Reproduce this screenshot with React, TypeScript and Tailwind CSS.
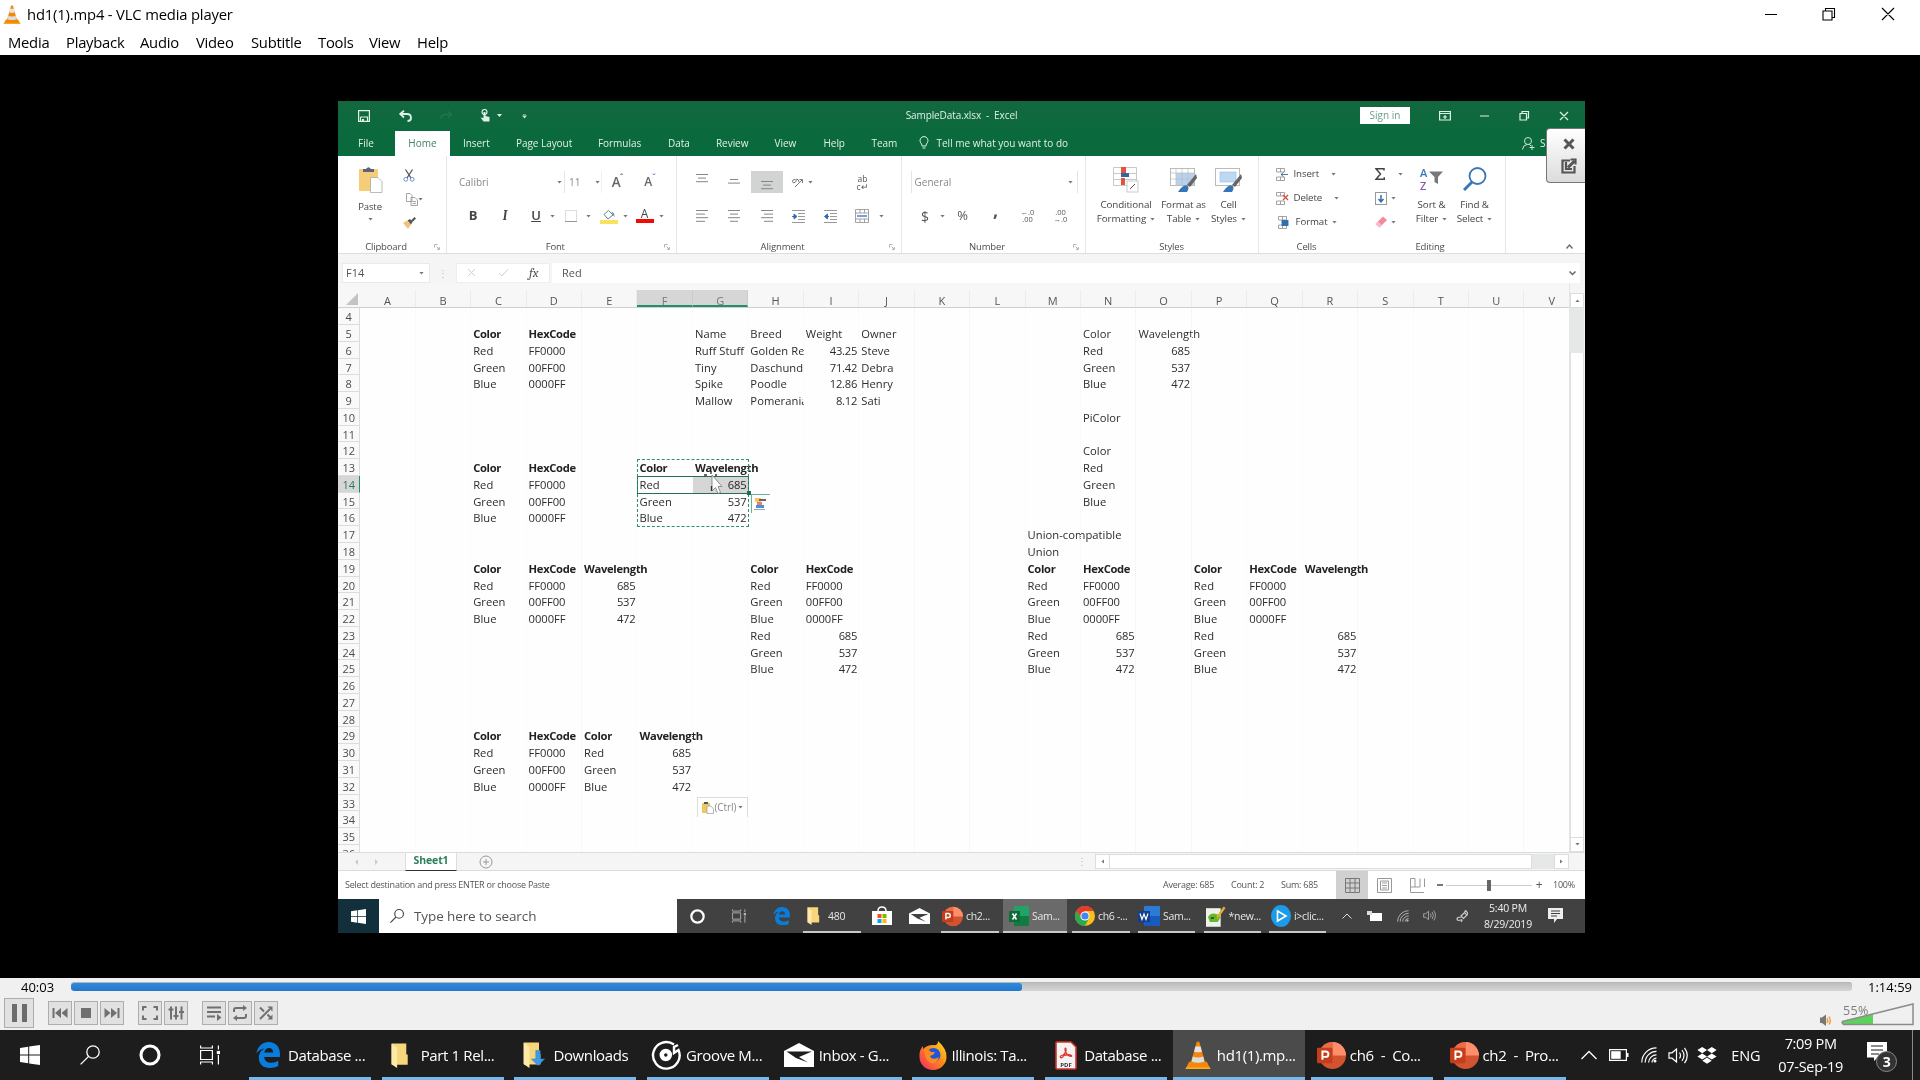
import React from "react";

type Kids = { children?: React.ReactNode; c?: string };

/* ---------- shared drawings ---------- */

const Cone = ({ s }: { s: number }) => (
  <svg width={s} height={s * 1.1} viewBox="0 0 20 22">
    <path d="M3.2 16 L16.8 16 L19.6 21.5 L0.4 21.5Z" fill="#f28a0c" />
    <path d="M0.8 20.4 H19.2 L19.6 22 H0.4Z" fill="#fdb01c" />
    <path d="M9 0.6 H11 L15.8 17.6 Q10 20 4.2 17.6Z" fill="#f5860d" />
    <path d="M8 4.2 H12 L13 8.2 Q10 9 7 8.2Z" fill="#e4e4e4" />
    <path d="M6 12 Q10 13.4 14 12 L15 15.8 Q10 17.8 5 15.8Z" fill="#dcdcdc" />
  </svg>
);

const Win = ({ s, f = "#fff" }: { s: number; f?: string }) => (
  <svg width={s} height={s} viewBox="0 0 20 20" fill={f}>
    <path d="M0 2.9 L8.2 1.8 V9.5 H0Z M9.2 1.6 L20 0 V9.5 H9.2Z M0 10.5 H8.2 V18.2 L0 17.1Z M9.2 10.5 H20 V20 L9.2 18.4Z" />
  </svg>
);

const Lens = ({ s, f = "#fff", w = 1.3 }: { s: number; f?: string; w?: number }) => (
  <svg width={s} height={s} viewBox="0 0 20 20" fill="none" stroke={f} strokeWidth={w}>
    <circle cx="13" cy="7" r="6.2" />
    <path d="M8.6 11.4 L0.6 19.4" />
  </svg>
);

const Ring = ({ s, w }: { s: number; w: number }) => (
  <svg width={s} height={s} viewBox="0 0 20 20" fill="none" stroke="#fff" strokeWidth={w}>
    <circle cx="10" cy="10" r="8.2" />
  </svg>
);

const TaskView = ({ s, f = "#fff" }: { s: number; f?: string }) => (
  <svg width={s} height={s} viewBox="0 0 20 20" fill="none" stroke={f} strokeWidth="1.2">
    <path d="M0.6 0.5 V3 H12.4 V0.5 M0.6 19.5 V17 H12.4 V19.5 M0.6 5.5 H12.4 V14.5 H0.6Z M18.4 0.5 V4.5 M18.4 10 V19.5" />
    <rect x="17.4" y="6.5" width="2" height="2" fill={f} />
  </svg>
);

const Edge = ({ s }: { s: number }) => (
  <svg width={s} height={s * 1.08} viewBox="0 0 24 26">
    <path
      d="M0.3 11.5 C1.5 4.5 6.5 0 12.8 0 C19.5 0 24 5 24 11.6 V15 H8.2 C8.4 19 11.6 20.8 15.2 20.8 C18 20.8 20.3 20 22.3 18.8 V24 C20 25.3 17 26 14 26 C7 26 2.8 22 2.8 16 C2.8 11.5 5.2 8.2 8.6 6.6 C5.3 6.9 2.3 8.6 0.3 11.5Z M8.3 10.6 H17.2 C17.2 7.8 15.6 6 13 6 C10.5 6 8.8 7.8 8.3 10.6Z"
      fill="#0a7cdc"
    />
  </svg>
);

const Folder = ({ s, arrow }: { s: number; arrow?: boolean }) => (
  <svg width={s} height={s} viewBox="0 0 26 26" className="overflow-visible">
    <path d="M4 0.5 H19 V12 H20.5 V22.5 H4Z" fill="#f7d57a" />
    <path d="M3.5 0.5 L9.5 5 V26 L3.5 22Z" fill="#ffe9a6" />
    {arrow && <path d="M15.8 8.5 H20.2 V17 H24.6 L18 23.5 L11.4 17 H15.8Z" fill="#3b9be6" stroke="#2b7fc4" strokeWidth=".5" />}
  </svg>
);

const Envelope = ({ w, f = "#1d1d1d" }: { w: number; f?: string }) => (
  <svg width={w} height={w * 0.8} viewBox="0 0 30 24">
    <path d="M0 8 L15 0 L30 8 V24 H0Z" fill="#fff" />
    <path d="M2.5 8.5 H28 L15 14 L24 19.5 L12 15 Z" fill={f} />
  </svg>
);

const Ppt = ({ s }: { s: number }) => (
  <svg width={s} height={s} viewBox="0 0 30 30">
    <circle cx="16" cy="15" r="14" fill="#d35230" />
    <path d="M16 1 A14 14 0 0 1 30 15 H16Z" fill="#ff8f6b" />
    <path d="M16 1 A14 14 0 0 0 2 15 H16Z" fill="#ed6c47" />
    <rect x="0" y="7" width="16" height="16" rx="1.2" fill="#c43e1c" />
    <path d="M5.6 19.4 V10.8 H9 A2.8 2.8 0 0 1 9 16.4 H5.6" fill="none" stroke="#fff" strokeWidth="2" />
  </svg>
);

const Caret = ({ c = "" }: { c?: string }) => (
  <svg width="5" height="3" viewBox="0 0 5 3" className={"shrink-0 " + c}>
    <path d="M.4 0 H4.600 L2.500 2.600Z" fill="#777" />
  </svg>
);

const Wifi = ({ s, f = "#fff" }: { s: number; f?: string }) => (
  <svg width={s} height={s} viewBox="0 0 16 16" fill="none" stroke={f} strokeWidth="1.2">
    <path d="M0.8 15.5 A14.6 14.6 0 0 1 15.5 0.9 M4.2 15.5 A11.2 11.2 0 0 1 15.5 4.4 M7.6 15.5 A7.8 7.8 0 0 1 15.5 7.9 M11 15.5 A4.5 4.5 0 0 1 15.5 11.2" />
    <circle cx="14" cy="14" r="1.5" fill={f} stroke="none" />
  </svg>
);

const Speaker = ({ s, f = "#fff" }: { s: number; f?: string }) => (
  <svg width={s} height={s * 0.85} viewBox="0 0 20 17" fill="none" stroke={f} strokeWidth="1.2">
    <path d="M1 5.8 H4 L8.5 2 V15 L4 11.2 H1Z M11.5 5.5 Q13.5 8.5 11.5 11.5 M14 3 Q18 8.5 14 14 M16.5 0.8 Q22 8.5 16.5 16.2" />
  </svg>
);

/* ---------- ribbon ---------- */

const Slot = ({ children, c = "" }: Kids) => (
  <div className={"flex shrink-0 items-center justify-center " + c}>{children}</div>
);

const Lines = ({ rows, c = "" }: { rows: [number, number][]; c?: string }) => (
  <svg width="12" height="14" viewBox="0 0 12 14" className={c} stroke="#868686" strokeWidth="1">
    {rows.map(([x, w], i) => (
      <path key={i} d={`M${x} ${1.5 + i * 3.6} H${x + w}`} />
    ))}
  </svg>
);

const Indent = ({ flip }: { flip?: boolean }) => (
  <svg width="13" height="13" viewBox="0 0 13 13" stroke="#999">
    <path d="M0 .5 H13 M6 3.5 H13 M6 6.5 H13 M6 9.5 H13 M0 12.5 H13" />
    <path d={flip ? "M5 6.5 L2 4 V9Z M0 6.5 H3" : "M0.5 6.5 L3.5 4 V9Z M3 6.5 H5"} fill="#2f6fb0" stroke="#2f6fb0" />
  </svg>
);

const Launcher = () => (
  <svg width="6" height="6" viewBox="0 0 6 6" fill="none" stroke="#aaa" strokeWidth=".9">
    <path d="M.5 3.5 V.5 H3.5 M2.5 2.5 L5.3 5.3 M5.4 3 V5.4 H3" />
  </svg>
);

const Group = ({ children, c, label, launch }: Kids & { label: string; launch?: boolean }) => (
  <div className={"flex h-[97px] shrink-0 flex-col border-r border-[#e6e6e6] " + c}>
    <div className="h-[85px] shrink-0">{children}</div>
    <div className={"grid h-[12px] shrink-0 items-center " + (launch ? "grid-cols-[0px_1fr_12px]" : "grid-cols-[0px_1fr_0px]")}>
      <span />
      <span className="text-center text-[9.5px] leading-[12px] tracking-[-0.15px] text-[#4c4c4c]">{label}</span>
      {launch && <Launcher />}
    </div>
  </div>
);

const Clipboard = () => (
  <Group label="Clipboard" launch c="w-[109px]">
    <div className="flex h-full">
      <div className="flex w-[64px] flex-col items-center pt-[11px]">
        <svg width="25" height="26" viewBox="0 0 25 26">
          <rect x="1" y="2" width="19" height="22" rx="1" fill="#f5cd78" />
          <path d="M5 2 H8 Q10.500 -1.500 13 2 H16 V5 H5Z" fill="#5e6275" />
          <path d="M12.500 10.500 H20 L24 14.500 V25.500 H12.500Z" fill="#fff" stroke="#aaa" strokeWidth=".8" />
        </svg>
        <span className="mt-[7px] text-[9.5px] leading-[14px] tracking-[-0.1px] text-[#444]">Paste</span>
        <Caret c="mt-[4px]" />
      </div>
      <div className="flex flex-col pt-[9px]">
        <Slot c="h-[20px] w-[14px]">
          <svg width="12" height="13" viewBox="0 0 12 13" fill="none">
            <path d="M2.500 0.500 L8 9 M9.500 0.500 L4 9" stroke="#555" strokeWidth="1.300" />
            <circle cx="2.800" cy="10.300" r="1.900" stroke="#6c8fc4" />
            <circle cx="9.200" cy="10.300" r="1.900" stroke="#6c8fc4" />
          </svg>
        </Slot>
        <Slot c="-ml-px mt-[4px] h-[20px] w-[26px] justify-between">
          <svg width="12" height="13" viewBox="0 0 12 13" fill="#fff" stroke="#9a9a9a" strokeWidth=".9">
            <path d="M.5 .5 H4 L6 2.500 V8.500 H.5Z M5 4.500 H9 L11.500 7 V12.500 H5Z M6.500 8.500 H10 M6.500 10.500 H10" />
          </svg>
          <Caret />
        </Slot>
        <Slot c="mt-[4px] h-[20px] w-[15px]">
          <svg width="13" height="12" viewBox="0 0 13 12">
            <path d="M0 6 L4 3.500 L8 7.500 L5 12Z" fill="#f2c374" />
            <path d="M4.500 3.500 L7 2 L9.500 5 L8 7.500Z" fill="#555" />
            <path d="M8 3.500 L11.500 0 L13 1.500 L9.500 5Z" fill="#555" />
          </svg>
        </Slot>
      </div>
    </div>
  </Group>
);

const FontGroup = () => (
  <Group label="Font" launch c="w-[229.5px]">
    <div className="flex h-[37px] pt-[15px] text-[10px] text-[#888] [&>*]:h-[22px]">
      <span className="w-[108px] pl-[12px] leading-[22px]">Calibri</span>
      <Slot c="w-[10px] border-r border-[#e4e4e4]"><Caret /></Slot>
      <span className="w-[28px] pl-[4px] leading-[22px]">11</span>
      <Slot c="w-[9px] border-r border-[#f0f0f0]"><Caret /></Slot>
      <Slot c="w-[31px] text-[13.5px] font-semibold text-[#666]">A<span className="-ml-px -mt-[9px] text-[8px]">ˆ</span></Slot>
      <Slot c="w-[34px] text-[12px] font-semibold text-[#666]">A<span className="-mt-[9px] text-[8px] text-[#4a6fb5]">ˇ</span></Slot>
    </div>
    <div className="flex h-[36px] pt-[12px] text-[13px] text-[#444] [&>*]:h-[22px]">
      <Slot c="w-[52px] font-bold">B</Slot>
      <Slot c="-ml-[6px] w-[24px] font-serif font-bold italic">I</Slot>
      <Slot c="ml-[8px] w-[22px] font-semibold underline">U</Slot>
      <Slot c="w-[10px]"><Caret /></Slot>
      <Slot c="w-[28px]">
        <svg width="12" height="12" viewBox="0 0 12 12" fill="none" stroke="#bbb"><path d="M.5 .5 H11.500 V11.500 H.5Z" strokeDasharray="1 1" /><path d="M0 11.500 H12" stroke="#999" /></svg>
      </Slot>
      <Slot c="w-[7px]"><Caret /></Slot>
      <Slot c="w-[33px]">
        <svg width="18" height="15" viewBox="0 0 18 15">
          <path d="M4 5.500 L8.500 1.500 L13 6 L8 10Z" fill="#fff" stroke="#68808c" />
          <path d="M11.500 2.500 Q15 4 14.300 8 L12.500 5Z" fill="#4a8fb5" />
          <rect y="11" width="18" height="4" fill="#fbe25e" />
        </svg>
      </Slot>
      <Slot c="w-[3px]"><Caret c="-ml-[3px]" /></Slot>
      <Slot c="w-[33px] flex-col">
        <span className="mt-[-3px] h-[12px] text-[12px] leading-[13px]">A</span>
        <span className="h-[4px] w-[18px] bg-[#f00a0a]" />
      </Slot>
      <Slot c="w-[3px]"><Caret c="-ml-[3px]" /></Slot>
    </div>
  </Group>
);

const Alignment = () => (
  <Group label="Alignment" launch c="w-[225px]">
    <div className="flex h-[37px] pl-[9px] pt-[15px] [&>*]:h-[22px]">
      <Slot c="w-[32px]"><Lines rows={[[0, 12], [2, 8], [0, 12]]} c="-mt-[4px]" /></Slot>
      <Slot c="w-[33px]"><Lines rows={[[2, 8], [0, 12]]} c="mt-[6px]" /></Slot>
      <Slot c="w-[32px] bg-[#d2d3d3]"><Lines rows={[[0, 12], [2, 8], [0, 12]]} c="mt-[9px]" /></Slot>
      <Slot c="w-[29px]">
        <svg width="12" height="11" viewBox="0 0 12 11" fill="none" stroke="#777"><path d="M4 10 L11 3 M8.500 2.500 L11.500 2.500 V6 M2 3 Q4 1 5.500 4 L3 6 Q0 5 2 3 M5 2 Q8 2 8 5" /></svg>
      </Slot>
      <Slot c="w-[3px]"><Caret c="-ml-[6px]" /></Slot>
      <Slot c="ml-[15px] w-[66px] flex-col text-[8.5px] leading-[9px] text-[#555]"><span className="h-[8px]">ab</span><span className="h-[9px]">c↵</span></Slot>
    </div>
    <div className="flex h-[36px] pl-[9px] pt-[12px] [&>*]:h-[22px]">
      <Slot c="w-[32px]"><Lines rows={[[0, 12], [0, 9], [0, 12], [0, 9]]} /></Slot>
      <Slot c="w-[33px]"><Lines rows={[[0, 12], [2, 8], [0, 12], [2, 8]]} /></Slot>
      <Slot c="w-[32px]"><Lines rows={[[0, 12], [3, 9], [0, 12], [3, 9]]} /></Slot>
      <Slot c="w-[32px]"><Indent flip /></Slot>
      <Slot c="w-[32px]"><Indent /></Slot>
      <Slot c="w-[30px]">
        <svg width="14" height="14" viewBox="0 0 14 14" fill="none" stroke="#999" strokeWidth=".9"><path d="M.5 .5 H13.500 V13.500 H.5Z M.5 4 H13.500 M.5 10 H13.500 M5 .5 V4 M9.500 .5 V4 M5 10 V13 M9.500 10 V13" /><path d="M2 7 H12" stroke="#3c7cc4" strokeWidth="1.400" /></svg>
      </Slot>
      <Slot c="w-[10px]"><Caret /></Slot>
    </div>
  </Group>
);

const NumberGroup = () => (
  <Group label="Number" launch c="w-[184px]">
    <div className="flex h-[37px] pt-[15px]">
      <div className="ml-[9px] flex h-[22px] w-[167px] items-center justify-between border-x border-[#e4e4e4] pl-[3px] pr-[4px] text-[10px] text-[#888]">
        General <Caret />
      </div>
    </div>
    <div className="flex h-[36px] pl-[8px] pt-[12px] text-[13px] text-[#555] [&>*]:h-[22px]">
      <Slot c="w-[31px] text-[14px]">$</Slot>
      <Slot c="w-[4px]"><Caret /></Slot>
      <Slot c="w-[36px]">%</Slot>
      <Slot c="w-[30px] pb-[12px] text-[18px] font-bold">,</Slot>
      <Slot c="w-[34px] flex-col text-[7.5px] leading-[7px]"><span><b className="text-[#3c6ca4]">←</b>.0</span><span>.00</span></Slot>
      <Slot c="w-[32px] flex-col text-[7.5px] leading-[7px]"><span>.00</span><span><b className="text-[#3c6ca4]">→</b>.0</span></Slot>
    </div>
  </Group>
);

const Big = ({ c, icon, a, b }: { c: string; icon: React.ReactNode; a: string; b: string }) => (
  <div className={"flex shrink-0 flex-col items-center pt-[11px] text-[9.8px] leading-[14px] tracking-[-0.1px] text-[#444] " + c}>
    <div className="h-[31px]">{icon}</div>
    <span className="whitespace-nowrap">{a}</span>
    <span className="flex items-center gap-[4px] whitespace-nowrap">{b}<Caret /></span>
  </div>
);

const Brush = () => (
  <>
    <path d="M26 7 L17 18 L20 20 L27 11Z" fill="#666" />
    <path d="M8 25 Q13 17 17 18.500 Q20 20 17 25Z" fill="#3874b8" />
  </>
);

const Styles = () => (
  <Group label="Styles" c="w-[173px]">
    <div className="flex">
      <Big c="w-[81px]" a="Conditional" b="Formatting" icon={
        <svg width="26" height="26" viewBox="0 0 26 26">
          <path d="M.5 .5 H23.500 V18.500 H.5Z M.5 6.500 H23.500 M.5 12.500 H23.500" fill="#fff" stroke="#bbb" strokeWidth=".8" />
          <rect x="8" y="0" width="5" height="6" fill="#e0553c" /><rect x="8" y="6" width="8" height="4" fill="#336699" /><rect x="8" y="11" width="4" height="7" fill="#e0553c" />
          <rect x="14" y="14" width="11" height="11" fill="#fff" stroke="#ccc" /><path d="M17 22 L22 17" stroke="#555" />
        </svg>} />
      <Big c="w-[34px]" a="Format as" b="Table" icon={
        <svg width="27" height="26" viewBox="0 0 27 26">
          <rect x=".5" y="1.500" width="24" height="17" fill="#fff" stroke="#bbb" /><rect x="6" y="6" width="18" height="12" fill="#b6d2ef" />
          <path d="M.5 6 H24 M.5 12 H24 M6 1 V18 M12 1 V18 M18 1 V18" stroke="#bbb" strokeWidth=".7" /><Brush />
        </svg>} />
      <Big c="w-[56px]" a="Cell" b="Styles" icon={
        <svg width="27" height="26" viewBox="0 0 27 26">
          <rect x=".5" y="1.500" width="24" height="17" fill="#fff" stroke="#bbb" /><rect x="5" y="5" width="16" height="10" fill="#bcd8f2" stroke="#9bbbdd" strokeWidth=".6" />
          <Brush />
        </svg>} />
    </div>
  </Group>
);

const CellsIcon = ({ k }: { k: number }) => (
  <svg width="13" height="13" viewBox="0 0 13 13" fill="none" stroke="#999" strokeWidth=".9">
    <path d="M.5 .5 H8.500 V4 H.5Z M4.500 .5 V4 M.5 9 H8.500 V12.500 H.5Z M4.500 9 V12.500" />
    {k === 0 && <path d="M12 6.500 H5 M7.500 4.500 L5 6.500 L7.500 8.500" stroke="#4a6a9a" />}
    {k === 1 && <path d="M7 3 L12 8 M12 3 L7 8" stroke="#d84a3a" strokeWidth="1.300" />}
    {k === 2 && <rect x="4" y="4.500" width="6" height="5" fill="#2f6fb0" stroke="#2f6fb0" />}
  </svg>
);

const cellItems: [string, string, string][] = [
  ["Insert", "", "w-[32px]"],
  ["Delete", "", "w-[35px]"],
  ["Format", "pl-[2px]", "w-[31px]"],
];

const Cells = () => (
  <Group label="Cells" c="w-[97px] border-transparent">
    <div className="flex flex-col pl-[17px] pt-[6px] text-[9.7px] text-[#444]">
      {cellItems.map(([t, p, w], i) => (
        <div key={t} className={"flex h-[24.3px] items-center gap-[5px] tracking-[-0.1px] " + p}>
          <CellsIcon k={i} />
          <span className={w}>{t}</span>
          <Caret />
        </div>
      ))}
    </div>
  </Group>
);

const Editing = () => (
  <Group label="Editing" c="w-[150px]">
    <div className="flex">
      <div className="flex w-[56px] flex-col pl-[19px] pt-[6px]">
        <div className="flex h-[24px] items-center gap-[13px]">
          <svg width="10" height="12" viewBox="0 0 10 12" fill="none" stroke="#444" strokeWidth="1.500"><path d="M9 2.500 V.8 H1 L5.500 6 L1 11.200 H9.300 V9.300" /></svg>
          <Caret />
        </div>
        <div className="flex h-[24px] items-center gap-[4px]">
          <svg width="12" height="13" viewBox="0 0 12 13" fill="none"><rect x=".5" y=".5" width="11" height="12" stroke="#999" /><path d="M6 3 V9.500 M3.500 7 L6 9.800 L8.500 7" stroke="#2f6fb0" strokeWidth="1.500" /></svg>
          <Caret />
        </div>
        <div className="flex h-[24px] items-center gap-[4px]">
          <svg width="12" height="12" viewBox="0 0 12 12"><path d="M.5 8 L8 .5 L12 4 L4.500 11.500Z" fill="#f08a9c" /><path d="M.5 8 L3 5.500 L7 9 L4.500 11.500Z" fill="#f8bcc6" /></svg>
          <Caret />
        </div>
      </div>
      <Big c="w-[40px]" a="Sort &" b="Filter" icon={
        <div className="-mt-px flex h-full">
          <div className="flex flex-col text-[11px] font-semibold leading-[13px]"><span className="h-[13px] text-[#3a78b8]">A</span><span className="h-[13px] text-[#8a5ab0]">Z</span></div>
          <svg width="14" height="20" viewBox="0 0 14 20" className="ml-[2px]"><path d="M0 5.500 H14 L9 11 V18 L5.500 16 V11Z" fill="#777" /></svg>
        </div>} />
      <Big c="w-[46px]" a="Find &" b="Select" icon={
        <svg width="24" height="24" viewBox="0 0 24 24" fill="none" stroke="#3a75b5"><circle cx="14.500" cy="9" r="8" strokeWidth="1.800" /><path d="M9 15 L1 23" strokeWidth="3" /></svg>} />
    </div>
  </Group>
);

/* ---------- sheet ---------- */

const COLS = "ABCDEFGHIJKLMNOPQRSTUV".split("");

type Row = Record<string, string>;
const rgb = [["Red", "FF0000", "685"], ["Green", "00FF00", "537"], ["Blue", "0000FF", "472"]];
const cells: Record<number, Row> = {
  5: { C: "*Color", D: "*HexCode", G: "Name", H: "Breed", I: "Weight", J: "Owner", N: "Color", O: "Wavelength" },
  6: { C: "Red", D: "FF0000", G: "Ruff Stuff", H: "Golden Re", I: "43.25", J: "Steve", N: "Red", O: "685" },
  7: { C: "Green", D: "00FF00", G: "Tiny", H: "Daschund", I: "71.42", J: "Debra", N: "Green", O: "537" },
  8: { C: "Blue", D: "0000FF", G: "Spike", H: "Poodle", I: "12.86", J: "Henry", N: "Blue", O: "472" },
  9: { G: "Mallow", H: "Pomerania", I: "8.12", J: "Sati" },
  10: { N: "PiColor" },
  12: { N: "Color" },
  13: { C: "*Color", D: "*HexCode", F: "*Color", G: "*Wavelength", N: "Red" },
  14: { C: "Red", D: "FF0000", F: "Red", G: "685", N: "Green" },
  15: { C: "Green", D: "00FF00", F: "Green", G: "537", N: "Blue" },
  16: { C: "Blue", D: "0000FF", F: "Blue", G: "472" },
  17: { M: "Union-compatible" },
  18: { M: "Union" },
  19: { C: "*Color", D: "*HexCode", E: "*Wavelength", H: "*Color", I: "*HexCode", M: "*Color", N: "*HexCode", P: "*Color", Q: "*HexCode", R: "*Wavelength" },
  29: { C: "*Color", D: "*HexCode", E: "*Color", F: "*Wavelength" },
};
rgb.forEach(([n, h, w], i) => {
  cells[20 + i] = { C: n, D: h, E: w, H: n, I: h, M: n, N: h, P: n, Q: h };
  cells[23 + i] = { H: n, I: w, M: n, N: w, P: n, R: w };
  cells[30 + i] = { C: n, D: h, E: n, F: w };
});

const ROWS = Array.from({ length: 33 }, (_, i) => i + 4);
const isNum = (v: string) => /^\d+(\.\d+)?$/.test(v);

const Cell = ({ v, clip }: { v?: string; clip?: boolean }) => {
  if (!v) return <div className="w-[55.45px] shrink-0" />;
  const bold = v[0] === "*";
  return (
    <div
      className={
        "w-[55.45px] shrink-0 whitespace-nowrap pl-[2px] pr-[2px] " +
        (isNum(v) ? "text-right tracking-[-0.2px] " : bold ? "font-bold tracking-[-0.32px] text-[#222] " : /\d/.test(v) ? "tracking-[-0.05px] " : "tracking-[0.04px] ") +
        (clip ? "overflow-hidden" : "")
      }
    >
      {bold ? v.slice(1) : v}
    </div>
  );
};

const Sheet = () => (
  <div className="relative h-[569px] w-[1231px] overflow-hidden bg-[#fefefe]">
    <div className="flex h-[25.300px] items-end border-b border-[#cfcfcf] bg-[#f8f7f8] text-[11px] text-[#555]">
      <div className="flex h-[16px] w-[22.3px] shrink-0 items-center justify-end pr-[2px]">
        <svg width="12" height="12" viewBox="0 0 12 12"><path d="M12 0 V12 H0Z" fill="#c4c4c4" /></svg>
      </div>
      {COLS.map((c) => (
        <div
          key={c}
          className={
            "flex h-[17px] w-[55.45px] shrink-0 items-center justify-center border-r leading-[12px] " +
            (c === "F" || c === "G" ? "border-b-2 border-[#cbcbcb] border-b-[#1f9068] bg-[#d6d6d6] pt-[6px] text-[#777]" : "border-[#ececec] pt-[4px]")
          }
        >
          {c}
        </div>
      ))}
    </div>
    {ROWS.map((r) => (
      <div key={r} className="flex h-[16.77px] text-[11.2px] leading-[18px] text-[#2c2c2c]">
        <div className={"w-[22.3px] shrink-0 border-b border-r border-[#dcdcdc] text-center text-[11px] tracking-[-0.1px] " + (r === 14 ? "border-r-[#1f9068] bg-[#d6d6d6] text-[#2c7a5a]" : "bg-[#f9f9f9] text-[#4c4c4c]")}>{r}</div>
        {COLS.map((c) => (
          <Cell key={c} v={cells[r]?.[c]} clip={c === "H" && r < 10} />
        ))}
      </div>
    ))}

    {/* faint column rules */}
    <div className="pointer-events-none absolute left-[22.3px] top-[26px] flex h-[543px]">
      {COLS.map((c) => (
        <div key={c} className={"w-[55.45px] shrink-0 border-r border-dotted " + ("JKUNORD".includes(c) ? "border-[#f0f0f0]" : "border-[#f8f8f8]")} />
      ))}
    </div>

    {/* copied range and selection */}
    <div className="absolute left-[355px] top-[193px] h-[17px] w-[55.500px] bg-[#cdcdcd] opacity-80 mix-blend-multiply" />
    <div className="absolute left-[299px] top-[193px] h-[18px] w-[112px] border border-[#25704f]" />
    <div className="absolute left-[299px] top-[176px] h-[68px] w-[112px] border-[1.500px] border-dashed border-[#2d9076]" />
    <div className="absolute left-[409px] top-[208px] h-[4px] w-[4px] bg-[#1f6f50]" />
    <svg className="absolute left-[365px] top-[187px]" width="20" height="26" viewBox="0 0 20 26">
      <path d="M9 5 V21 L12.500 17.500 L15 23.500 L17.500 22.500 L15 16.500 H19Z" fill="#fff" stroke="#777" strokeWidth=".8" />
      <path d="M1 5 H4 M12 5 H14 M8 1 V4 M8.500 16 V21" stroke="#333" strokeWidth="1.300" />
    </svg>
    <div className="absolute left-[413px] top-[211px] flex h-[19px] w-[19px] items-center justify-center border-l border-t border-[#6fae98] bg-white pr-[2px]">
      <svg width="12" height="14" viewBox="0 0 12 14"><rect x="1" y="1" width="6" height="4" fill="#f5c860" /><rect x="5" y="2" width="7" height="2" fill="#666" /><rect x="3" y="5" width="5" height="3" fill="#e8806a" /><rect x="2" y="8" width="8" height="3" fill="#4a90d8" /><rect x="0" y="12" width="11" height="1" fill="#8ab" /></svg>
    </div>
    <div className="absolute left-[358.500px] top-[514px] flex h-[20px] w-[51px] items-center gap-px border border-b-0 border-[#dcdcdc] bg-white pl-[4px] text-[10px] tracking-[-0.1px] text-[#888]">
      <svg width="12" height="12" viewBox="0 0 12 12"><path d="M0 1 H8 V11 H0Z" fill="#ecc860" /><rect x="2" y="0" width="4" height="2" fill="#555" /><path d="M5 4 H9 L11.500 7 V11.500 H5Z" fill="#fff" stroke="#999" strokeWidth=".7" /></svg>
      (Ctrl) <Caret c="ml-px" />
    </div>
  </div>
);

/* ---------- Excel window ---------- */

const tabs: [string, string][] = [
  ["Insert", "w-[53px]"], ["Page Layout", "w-[82px]"], ["Formulas", "w-[70px]"], ["Data", "w-[48px]"],
  ["Review", "w-[58.5px]"], ["View", "w-[49px]"], ["Help", "w-[48px]"], ["Team", "w-[47px]"],
];

const Excel = () => (
  <div className="flex h-[798px] flex-col bg-[#f6f5f6]">
    {/* title */}
    <div className="relative flex h-[55px] shrink-0 flex-col bg-[#0b6a3d] text-[10px] text-[#e0f0e8]">
      <div className="grid h-[30px] grid-cols-[1fr_auto_1fr] items-center bg-gradient-to-b from-[#13683f] to-[#0b6a3d]">
        <div className="-mt-px flex items-center pl-[19px]">
          <Slot c="w-[13px]">
            <svg width="12" height="12" viewBox="0 0 12 12" fill="none" stroke="#dff0e6" strokeWidth="1.200"><path d="M.6 .6 H11.400 V11.400 H.6Z M2.500 7 H9.500 V11 M2.500 7 V11" /><path d="M4 10 H6" strokeWidth="2" /></svg>
          </Slot>
          <Slot c="ml-[28px] w-[14px]">
            <svg width="13" height="12" viewBox="0 0 13 12" fill="none" stroke="#dff0e6" strokeWidth="1.800"><path d="M5 .8 L1.200 4 L5 7.500 M1.500 4 H8 Q12 4 12 8 Q12 11 8.500 11" /></svg>
          </Slot>
          <Slot c="ml-[27px] w-[14px]">
            <svg width="12" height="10" viewBox="0 0 12 10" fill="none" stroke="#22754b" strokeWidth="1.500"><path d="M8 .5 L11.500 3.500 L8 6.500 M11 3.500 H5 Q1 3.500 1 8" /></svg>
          </Slot>
          <Slot c="ml-[26px] w-[12px]">
            <svg width="10" height="13" viewBox="0 0 10 13"><circle cx="4.500" cy="3" r="2.500" fill="none" stroke="#dff0e6" strokeWidth="1.200" /><path d="M3.500 3 H5.500 V7 L9.500 8 V12.500 H3.500 L.5 8.500 L3.500 9Z" fill="#dff0e6" /></svg>
          </Slot>
          <svg width="5" height="3" viewBox="0 0 5 3" className="ml-[6px]"><path d="M0 0 H5 L2.500 3Z" fill="#dff0e6" /></svg>
          <svg width="5" height="5" viewBox="0 0 5 5" className="ml-[20px] mt-[2px]"><path d="M0 1.500 H5 L2.500 4.500Z M1 0 H4 V.6 H1Z" fill="#c8e0d4" /></svg>
        </div>
        <span className="-mt-px whitespace-pre tracking-[-0.1px]">SampleData.xlsx  -  Excel</span>
        <div className="-mt-px flex items-center justify-end pr-[6px]">
          <span className="mr-[29px] flex h-[17px] w-[50px] items-center justify-center bg-white text-[#6d9d86]">Sign in</span>
          <svg width="140" height="12" viewBox="0 0 140 12" fill="none" stroke="#dff0e6" strokeWidth="1.200">
            <path d="M.6 1.500 H11.400 V10 H.6Z M.6 3.500 H11.400 M6 5 V9 M4 7 H8 M41 6 H50 M81 3.500 H87.500 V10 H81Z M83 3.500 V1.500 H89.500 V8 H88 M121 2 L129 10 M129 2 L121 10" />
          </svg>
        </div>
      </div>
      <div className="flex h-[25px] items-center pb-px">
        <span className="w-[57px] pl-[20px]">File</span>
        <span className="-mb-px flex h-[25px] w-[55px] items-center justify-center bg-white text-[#3f8361]">Home</span>
        <span className="w-[13px]" />
        {tabs.map(([t, w]) => (
          <span key={t} className={"shrink-0 whitespace-nowrap tracking-[-0.05px] " + w}>{t}</span>
        ))}
        <svg width="10" height="14" viewBox="0 0 10 14" fill="none" stroke="#dff0e6"><path d="M3 10 Q3 8 1.500 6.500 A4 4 0 1 1 8.500 6.500 Q7 8 7 10Z M3.500 12 H6.500" /></svg>
        <span className="ml-[8px]">Tell me what you want to do</span>
        <svg width="13" height="13" viewBox="0 0 13 13" fill="none" stroke="#cfe5d9" className="ml-auto"><circle cx="6" cy="4" r="3.500" /><path d="M.5 12.500 Q1 8 5 7.500 M7 7 L9 9 M10 8 V13 M7.500 10.500 H12.500" /></svg>
        <span className="ml-[5px] w-[45px]">S</span>
      </div>
      {/* floating viewer control */}
      <div className="absolute left-[1208px] top-[27px] z-10 flex h-[55px] w-[39px] flex-col items-center gap-[8px] rounded-l-[4px] border border-r-0 border-[#777] bg-gradient-to-b from-white to-[#dcdcdc] pl-[5px] pt-[9px]">
        <svg width="12" height="12" viewBox="0 0 12 12" stroke="#555" strokeWidth="3"><path d="M1.500 1.500 L10.500 10.500 M10.500 1.500 L1.500 10.500" /></svg>
        <svg width="16" height="16" viewBox="0 0 16 16" fill="none" stroke="#555" strokeWidth="2.200"><path d="M9 2.500 H1.500 V14.500 H13.500 V8 M5 4 V11 H11" /><path d="M7 9.500 L13.500 3" strokeWidth="3" /><path d="M9.500 1.500 H14.500 V6.500" /></svg>
      </div>
    </div>

    {/* ribbon */}
    <div className="flex h-[98px] shrink-0 border-b border-[#dedede] bg-white">
      <Clipboard />
      <FontGroup />
      <Alignment />
      <NumberGroup />
      <Styles />
      <Cells />
      <Editing />
      <div className="flex flex-1 items-end justify-end pb-[4px] pr-[12px]">
        <svg width="7" height="5" viewBox="0 0 7 5" fill="none" stroke="#666" strokeWidth="1.300"><path d="M.5 4.500 L3.500 1 L6.500 4.500" /></svg>
      </div>
    </div>

    {/* formula bar */}
    <div className="mt-[9px] flex h-[20px] shrink-0 items-center pl-[4px] pr-[5px] text-[11px] text-[#555]">
      <div className="flex h-full w-[88px] items-center justify-between border border-[#eaeaea] bg-white pl-[3px] pr-[5px]">F14<Caret /></div>
      <span className="w-[26px] text-center text-[10px] text-[#bbb]">⋮</span>
      <div className="flex h-full w-[94px] items-center border border-[#eee] bg-white">
        <svg width="94" height="14" viewBox="0 0 94 14" fill="none" stroke="#d0d0d0"><path d="M11 3 L18 10 M18 3 L11 10 M42 7 L45 10 L51 3" /></svg>
        <span className="-ml-[22px] font-serif text-[13px] italic text-[#555]">fx</span>
      </div>
      <div className="ml-[2px] flex h-full flex-1 items-center justify-between bg-white pl-[10px] pr-[4px]">
        Red
        <svg width="7" height="5" viewBox="0 0 7 5" fill="none" stroke="#666" strokeWidth="1.500"><path d="M.5 .5 L3.500 3.500 L6.500 .5" /></svg>
      </div>
    </div>

    <div className="flex h-[569px] shrink-0">
      <Sheet />
      <div className="flex w-[16px] flex-col border-l border-[#e4e4e4] pt-[10px]">
        <Slot c="h-[15px] w-[14px] border border-[#ddd] bg-white"><Caret c="rotate-180" /></Slot>
        <div className="h-[45px] w-[14px] bg-[#e6e7e7]" />
        <div className="w-[14px] flex-1 border-x border-[#e0e0e0] bg-white" />
        <Slot c="h-[15px] w-[14px] border border-[#ddd] bg-white"><Caret /></Slot>
      </div>
    </div>

    {/* sheet tabs */}
    <div className="flex h-[19px] shrink-0 items-center border-y border-[#dcdcdc] text-[10.5px]">
      <svg width="67" height="8" viewBox="0 0 67 8" fill="#ccc"><path d="M20 1 V7 L17 4Z M37 1 V7 L40 4Z" /></svg>
      <span className="flex h-[18px] w-[52px] items-center justify-center border-x border-b border-[#ddd] border-b-[#333] bg-white font-bold tracking-[-0.1px] text-[#2a8059]">Sheet1</span>
      <svg width="14" height="14" viewBox="0 0 14 14" fill="none" stroke="#999" className="ml-[22px]"><circle cx="7" cy="7" r="6" /><path d="M4 7 H10 M7 4 V10" /></svg>
      <span className="ml-auto mr-[8px] text-[10px] text-[#bbb]">⋮</span>
      <Slot c="h-[15px] w-[15px] border border-[#ddd] bg-white"><Caret c="rotate-90" /></Slot>
      <div className="h-[15px] w-[422px] border-y border-r border-[#ddd] bg-white" />
      <div className="h-[15px] w-[22px] bg-[#e6e7e7]" />
      <Slot c="mr-[16px] h-[15px] w-[15px] border border-[#ddd] bg-white"><Caret c="-rotate-90" /></Slot>
    </div>

    {/* status bar */}
    <div className="flex h-[28px] shrink-0 items-center bg-white pl-[7px] text-[9px] tracking-[-0.24px] text-[#555]">
      <span>Select destination and press ENTER or choose Paste</span>
      <span className="ml-auto w-[68px]">Average: 685</span>
      <span className="w-[50px]">Count: 2</span>
      <span className="w-[55px]">Sum: 685</span>
      <Slot c="h-[28px] w-[32px] bg-[#d0d0d0]">
        <svg width="15" height="15" viewBox="0 0 15 15" fill="none" stroke="#777"><path d="M.5 .5 H14.500 V14.500 H.5Z M.5 5 H14.500 M.5 10 H14.500 M5 .5 V14.500 M10 .5 V14.500" /></svg>
      </Slot>
      <Slot c="w-[33px]"><svg width="15" height="15" viewBox="0 0 15 15" fill="none" stroke="#999"><path d="M.5 .5 H14.500 V14.500 H.5Z M3.500 3 H11.500 V12 H3.500Z M5 5 H10 M5 7.500 H10 M5 10 H10" /></svg></Slot>
      <Slot c="w-[32px]"><svg width="15" height="15" viewBox="0 0 15 15" fill="none" stroke="#999"><path d="M.5 14 V.5 H5 V9 H.5 M5 9 H10 V.5 M14.500 .5 V9 M.5 14.500 H14" /></svg></Slot>
      <span className="ml-[4px] h-[1.5px] w-[6px] bg-[#777]" />
      <div className="ml-[3px] flex h-[12px] w-[86px] items-center justify-center bg-[linear-gradient(#ccc,#ccc)] bg-[length:100%_1px] bg-center bg-no-repeat"><span className="h-[11px] w-[4px] bg-[#666]" /></div>
      <Slot c="w-[14px] text-[12px]">+</Slot>
      <span className="ml-[7px] w-[32px]">100%</span>
    </div>
  </div>
);

/* ---------- taskbar inside the recording ---------- */

const Mini = ({ c, icon, t, on }: { c: string; icon: React.ReactNode; t: string; on?: boolean }) => (
  <div className={"flex h-full shrink-0 items-center gap-[3px] whitespace-nowrap border-b-2 border-[#c9c9c9] pt-[2px] text-[10.5px] tracking-[-0.3px] text-[#e6e6e6] " + (on ? "bg-[#6a6a6a] " : "") + c}>
    {icon}
    <span className="pt-px">{t}</span>
  </div>
);

const InnerTaskbar = () => (
  <div className="flex h-[34px] shrink-0 bg-[#414141]">
    <Slot c="w-[41px] bg-[#12303b]"><Win s={15} /></Slot>
    <div className="flex w-[298px] items-center bg-white pl-[11px] text-[13.5px] tracking-[-0.1px] text-[#555]">
      <Lens s={14} f="#444" w={1.6} />
      <span className="ml-[10px] pt-px">Type here to search</span>
    </div>
    <Slot c="w-[41px]"><Ring s={15} w={3} /></Slot>
    <Slot c="w-[41px]"><TaskView s={14} f="#bbb" /></Slot>
    <Slot c="w-[44px]"><Edge s={17} /></Slot>
    <Mini c="w-[58px] gap-[5px] pl-[2px]" icon={<Folder s={18} />} t="480" />
    <Slot c="w-[41px]">
      <svg width="20" height="20" viewBox="0 0 20 20"><path d="M0 5 H20 V19 H0Z" fill="#fff" /><path d="M6 5 Q6 1 10 1 Q14 1 14 5" fill="none" stroke="#fff" strokeWidth="1.500" /><rect x="5.500" y="8" width="4" height="4" fill="#f25022" /><rect x="10.500" y="8" width="4" height="4" fill="#7fba00" /><rect x="5.500" y="13" width="4" height="4" fill="#00a4ef" /><rect x="10.500" y="13" width="4" height="4" fill="#ffb900" /></svg>
    </Slot>
    <Slot c="w-[34px]"><Envelope w={21} f="#414141" /></Slot>
    <Mini c="ml-[5px] w-[58px] pl-px" icon={<Ppt s={21} />} t="ch2..." />
    <Mini c="ml-[4px] w-[64px] pl-[6px]" on icon={<svg width="20" height="20" viewBox="0 0 20 20"><rect x="5" width="15" height="20" rx="1" fill="#21a366" /><rect x="5" y="10" width="15" height="10" fill="#107c41" /><rect y="5" width="11" height="11" fill="#0f6b39" /><path d="M3.500 7.500 L7.500 13.500 M7.500 7.500 L3.500 13.500" stroke="#fff" strokeWidth="1.500" /></svg>} t="Sam..." />
    <Mini c="ml-[5px] w-[58px] pl-[3px]" icon={<svg width="20" height="20" viewBox="0 0 20 20"><circle cx="10" cy="10" r="10" fill="#fbc116" /><path d="M1.300 5 A10 10 0 0 1 18.700 5 H10 L6 12Z" fill="#e33b2e" /><path d="M1.300 5 A10 10 0 0 0 10 20 L14 12 H6Z" fill="#2da94f" /><circle cx="10" cy="10" r="4.600" fill="#fff" /><circle cx="10" cy="10" r="3.600" fill="#4285f4" /></svg>} t="ch6 -..." />
    <Mini c="ml-[8px] w-[57px]" icon={<svg width="22" height="20" viewBox="0 0 22 20"><rect x="6" width="16" height="20" rx="1" fill="#2b7cd3" /><rect x="6" y="10" width="16" height="10" fill="#185abd" /><rect y="5" width="12" height="11" fill="#103f91" /><path d="M2 7.500 L4 13.500 L6 8 L8 13.500 L10 7.500" fill="none" stroke="#fff" strokeWidth="1.200" /></svg>} t="Sam..." />
    <Mini c="ml-[9px] w-[57px] pl-[2px]" icon={<svg width="20" height="21" viewBox="0 0 20 21"><path d="M0 2 H15 V21 H0Z" fill="#eef3ea" /><path d="M2 11 Q5 6 11 8 L15 11 L12 16 H4Z" fill="#69b82e" /><path d="M5 12 H8 M10 11 H13" stroke="#2c5c14" strokeWidth="2" /><path d="M19 1 L11 12" stroke="#e0b02c" strokeWidth="2.500" /></svg>} t="*new..." />
    <Mini c="ml-[8px] w-[57px] pl-[2px]" icon={<svg width="20" height="22" viewBox="0 0 20 22"><ellipse cx="10" cy="11" rx="10" ry="11" fill="#1b9be8" /><path d="M6.500 6 L15 11 L6.500 16Z" fill="none" stroke="#fff" strokeWidth="1.600" /></svg>} t="i>clic..." />
    <div className="flex flex-1 items-center">
      <svg width="10" height="6" viewBox="0 0 10 6" fill="none" stroke="#ddd" className="ml-[16px]"><path d="M.5 5.500 L5 1 L9.500 5.500" /></svg>
      <svg width="15" height="11" viewBox="0 0 15 11" className="ml-[15px]"><rect x="3" y="2" width="12" height="8" fill="#fff" /><rect width="5" height="4" fill="#ddd" /></svg>
      <span className="ml-[15px]"><Wifi s={12} f="#bbb" /></span>
      <span className="ml-[14px]"><Speaker s={13} f="#bbb" /></span>
      <svg width="12" height="13" viewBox="0 0 12 13" fill="none" stroke="#ccc" className="ml-[20px]"><path d="M5 6 L8.500 2.500 L11 5 L7.500 8.500Z M8.500 2.500 L9.500 .5 L12 3 L11 5 M5.500 7 Q1 7 1 9 Q1 11 5 10 Q7 9.500 5 12" strokeWidth="1.200" /></svg>
      <div className="ml-[11px] w-[58px] text-center text-[10.5px] leading-[16px] tracking-[-0.2px] text-[#eee]">5:40 PM<br />8/29/2019</div>
      <svg width="16" height="16" viewBox="0 0 16 16" className="ml-[11px]"><path d="M0 0 H15 V11 H9 L6 15 V11 H0Z" fill="#eee" /><path d="M3 3 H12 M3 5.500 H12 M3 8 H9" stroke="#414141" /></svg>
    </div>
  </div>
);

/* ---------- player ---------- */

const menu: [string, string][] = [
  ["Media", "w-[58px]"], ["Playback", "w-[74px]"], ["Audio", "w-[56px]"], ["Video", "w-[55px]"],
  ["Subtitle", "w-[67px]"], ["Tools", "w-[51px]"], ["View", "w-[48px]"], ["Help", "w-[48px]"],
];

const Btn = ({ children, c = "" }: Kids) => (
  <div className={"flex h-[24px] w-[24px] shrink-0 items-center justify-center border border-[#adadad] bg-[#e1e1e1] " + c}>
    <svg width="16" height="16" viewBox="0 0 16 16" fill="none" stroke="#707070" strokeWidth="2">{children}</svg>
  </div>
);

const Player = () => (
  <div className="flex h-[52px] shrink-0 flex-col bg-[#f0f0f0]">
    <div className="flex h-[18px] items-center text-[13px] text-black">
      <span className="w-[71px] pl-[21px] pt-px">40:03</span>
      <div className="-mt-px h-[9px] w-[1781px] overflow-hidden rounded-[3px] border-t border-[#b5b5b5] bg-gradient-to-b from-[#bdbdbd] to-[#d6d6d6]">
        <div className="h-full w-[951px] rounded-[3px] bg-gradient-to-b from-[#2c8ae0] to-[#2577c8]" />
      </div>
      <span className="ml-[16px] pt-px">1:14:59</span>
    </div>
    <div className="flex h-[34px] items-center pb-px pl-[4px]">
      <div className="flex h-[30px] w-[30px] items-center justify-center gap-[5px] border border-[#adadad] bg-[#e1e1e1]">
        <span className="h-[18px] w-[5px] bg-[#6c6c6c]" />
        <span className="h-[18px] w-[5px] bg-[#6c6c6c]" />
      </div>
      <Btn c="ml-[14px]"><path d="M1.500 3 V13" /><path d="M9 3 V13 L3 8Z M15.500 3 V13 L9.500 8Z" fill="#707070" stroke="none" /></Btn>
      <Btn c="ml-[2px]"><rect x="3" y="3" width="10" height="10" fill="#707070" stroke="none" /></Btn>
      <Btn c="ml-[2px]"><path d="M14.500 3 V13" /><path d="M.5 3 V13 L6.500 8Z M7 3 V13 L13 8Z" fill="#707070" stroke="none" /></Btn>
      <Btn c="ml-[14px]"><path d="M1 5.500 V2 H4.500 M11.500 2 H15 V5.500 M15 10.500 V14 H11.500 M4.500 14 H1 V10.500" /></Btn>
      <Btn c="ml-[2px]"><path d="M3 1.500 V14.500 M.5 4.500 H5.500 M8 1.500 V14.500 M5.500 11 H10.500 M13.500 1.500 V14.500 M11 7 H16" /></Btn>
      <Btn c="ml-[14px]"><path d="M1 2.500 H15 M1 7 H15 M1 11.500 H9" /><path d="M11 9 V16 L15.500 12.500Z" fill="#707070" stroke="none" /></Btn>
      <Btn c="ml-[2px]"><path d="M2 7 V5 Q2 3 4 3 H12 M14 9 V11 Q14 13 12 13 H4" /><path d="M11 0 L15 3 L11 6Z M5 10 L1 13 L5 16Z" fill="#707070" stroke="none" /></Btn>
      <Btn c="ml-[2px]"><path d="M2 14 L12 4 M2 2.500 L6 6.500 M9.500 9.500 L13 13" /><path d="M9.500 1.500 H14.500 V6.500Z M14.500 9.500 V14.500 H9.500Z" fill="#707070" stroke="none" /></Btn>
      <svg width="13" height="13" viewBox="0 0 13 13" className="ml-auto mt-[16px]"><path d="M0 3.500 H2 L6 .5 V12 L2 9 H0Z" fill="#777" /><path d="M7 4 Q8.500 6.500 7 9 M9 2.500 Q11.500 6.500 9 10.500" fill="none" stroke="#f0962e" strokeWidth="1.300" /></svg>
      <div className="relative ml-[8px] mr-[6px] mt-[3px] h-[26px] w-[73px]">
        <svg width="73" height="26" viewBox="0 0 73 26" className="absolute left-0 top-0">
          <path d="M1.500 21 L32 13.200 V23 H1.500Z" fill="#5cd25c" />
          <path d="M1.500 20.500 L72 3 V23.500 H2.500 Q.5 22 1.500 20.500Z" fill="none" stroke="#8a8a8a" strokeWidth="1.500" />
        </svg>
        <span className="absolute left-[2px] top-0 text-[12.500px] leading-[19px] tracking-[0.3px] text-[#7d7d7d]">55%</span>
      </div>
    </div>
  </div>
);

/* ---------- desktop taskbar ---------- */

const App1 = ({ icon, t, on, nudge }: { icon: React.ReactNode; t: string; on?: boolean; nudge?: boolean }) => (
  <div className={"flex h-full shrink-0 items-center border-b-[3px] border-[#76b9ed] pt-[3px] " + (on ? "ml-[-5px] mr-[6px] w-[132px] bg-[#4b4b4b] pl-[5px]" : "mr-[10.7px] w-[122px]")}>
    <Slot c={nudge ? "w-[39px] pl-[2px]" : "w-[39px] pr-px"}>{icon}</Slot>
    <span className="whitespace-pre text-[15px] tracking-[-0.37px] text-white">{t}</span>
  </div>
);

const Taskbar = () => (
  <div className="flex h-[50px] shrink-0 bg-[#1d1d1d]">
    <Slot c="w-[60px]"><Win s={20} /></Slot>
    <Slot c="w-[60px]"><Lens s={20} /></Slot>
    <Slot c="w-[60px]"><Ring s={22} w={2.8} /></Slot>
    <Slot c="w-[60px]"><TaskView s={20} /></Slot>
    <span className="w-[9px]" />
    <App1 icon={<Edge s={24} />} t="Database ..." />
    <App1 icon={<Folder s={25} />} t="Part 1 Rel..." />
    <App1 icon={<Folder s={26} arrow />} t="Downloads" />
    <App1 t="Groove M..." icon={
      <svg width="30" height="30" viewBox="0 0 30 30" fill="none" stroke="#fff" strokeWidth="2.400"><path d="M23 4.500 A13.300 13.300 0 1 0 27.500 10 L23 13 V7 L27 5" /><circle cx="14.800" cy="15" r="4" strokeWidth="4.500" /></svg>} />
    <App1 icon={<Envelope w={30} />} t="Inbox - G..." />
    <App1 nudge t="Illinois: Ta..." icon={
      <svg width="28" height="29" viewBox="0 0 28 29">
        <defs><linearGradient id="fx" x1="1" y1="0" x2="0" y2="1"><stop offset="0" stopColor="#ffe226" /><stop offset=".45" stopColor="#ff8a16" /><stop offset="1" stopColor="#f0246e" /></linearGradient></defs>
        <path d="M19 0 Q28 8 27.500 16 A13.500 13 0 0 1 .5 16 Q0 9 4 5 V8 Q8 4 14 4 Q19 5 19 0Z" fill="url(#fx)" />
        <circle cx="14.500" cy="14" r="7" fill="#1c57d8" />
        <path d="M5 8 Q10 8 12 11 H16 L14 14 Q10 14 12 17 Q16 19 20 16 Q18 23 12 22 Q6 20 5 8Z" fill="#ff8a22" />
      </svg>} />
    <App1 nudge t="Database ..." icon={
      <svg width="22" height="29" viewBox="0 0 22 29"><path d="M1 2 Q1 1 2 1 H16 L21 6 V27 Q21 28 20 28 H2 Q1 28 1 27Z" fill="#f3f3f3" stroke="#d8322a" strokeWidth="1.600" /><path d="M5.500 16.500 Q4.500 15 8 14 Q11.500 12 11 8 Q10.500 6.500 10 8 Q10 12 14 15 Q17.500 16 16.500 14.500 Q14 13 9 14.500 Q7 17.500 5.500 16.500Z" fill="none" stroke="#e0352b" strokeWidth="1.300" /><text x="11" y="25.500" textAnchor="middle" fontSize="6" fontWeight="700" fontFamily="Open Sans, sans-serif" fill="#333">PDF</text></svg>} />
    <App1 nudge icon={<Cone s={26} />} t="hd1(1).mp..." on />
    <App1 nudge icon={<Ppt s={29} />} t="ch6  -  Co..." />
    <App1 nudge icon={<Ppt s={29} />} t="ch2  -  Pro..." />
    <div className="flex flex-1 items-center">
      <svg width="16" height="10" viewBox="0 0 16 10" fill="none" stroke="#fff" strokeWidth="1.300" className="ml-[5px] shrink-0"><path d="M.5 9 L8 1.500 L15.500 9" /></svg>
      <svg width="20" height="12" viewBox="0 0 20 12" className="ml-[12px] shrink-0"><path d="M.6 .6 H17.400 V11.400 H.6Z" fill="none" stroke="#fff" strokeWidth="1.200" /><rect x="2.200" y="2.200" width="9.500" height="7.600" fill="#fff" /><rect x="18" y="4" width="1.500" height="4" fill="#fff" /></svg>
      <span className="ml-[12px] shrink-0"><Wifi s={16} /></span>
      <span className="ml-[11px] shrink-0"><Speaker s={20} /></span>
      <svg width="20" height="17" viewBox="0 0 20 17" fill="#fff" className="ml-[9px] shrink-0"><path d="M5.200 0 L10 3.100 L5.200 6.200 L.4 3.100Z M14.800 0 L19.600 3.100 L14.800 6.200 L10 3.100Z M5.200 6.400 L10 9.500 L5.200 12.600 L.4 9.500Z M14.800 6.400 L19.600 9.500 L14.800 12.600 L10 9.500Z M10 10.600 L14.700 13.700 L10 16.800 L5.300 13.700Z" /></svg>
      <span className="ml-[14px] w-[40px] shrink-0 pt-[2px] text-[14.500px] tracking-[-0.1px] text-white">ENG</span>
      <div className="w-[79px] shrink-0 text-center text-[14.500px] leading-[23px] tracking-[-0.3px] text-white">7:09 PM<br />07-Sep-19</div>
      <div className="relative ml-[17px] mt-[4px] h-[30px] w-[32px] shrink-0">
        <svg width="32" height="30" viewBox="0 0 32 30"><path d="M0 0 H20 V15.500 H10.500 L7 19 V15.500 H0Z" fill="#fff" /><path d="M4 4 H16 M4 8 H16 M4 12 H12" stroke="#1d1d1d" strokeWidth="1.200" /><circle cx="19.500" cy="19.500" r="10" fill="#333" stroke="#8a8a8a" /></svg>
        <span className="absolute left-[14px] top-[9px] w-[11px] text-center text-[14px] font-bold leading-[21px] text-white">3</span>
      </div>
      <span className="ml-[13px] h-full w-px bg-[#8a8a8a]" />
    </div>
  </div>
);

export default function App() {
  return (
    <div className="flex h-[1080px] w-[1920px] flex-col overflow-hidden bg-white font-['Open_Sans',sans-serif] text-black">
      <div className="flex h-[29px] shrink-0 items-center pl-[3px]">
        <Cone s={18} />
        <span className="ml-[6px] text-[14.800px] tracking-[-0.17px]">hd1(1).mp4 - VLC media player</span>
        <svg width="131" height="14" viewBox="0 0 131 14" fill="none" stroke="#000" strokeWidth="1.100" className="-mt-px ml-auto mr-[25px]">
          <path d="M1 7.500 H13 M59 4 H68 V13 H59Z M61.500 4 V1.500 H70.500 V10.500 H68 M118 1 L130 13 M130 1 L118 13" />
        </svg>
      </div>
      <div className="flex h-[26px] shrink-0 items-center pl-[8px] pt-px text-[14.800px] tracking-[-0.25px]">
        {menu.map(([t, w]) => (
          <span key={t} className={w}>{t}</span>
        ))}
      </div>
      <div className="flex h-[923px] shrink-0 justify-start bg-black pl-[338px] pt-[46px]">
        <div className="flex h-[832px] w-[1247px] flex-col overflow-hidden">
          <Excel />
          <InnerTaskbar />
        </div>
      </div>
      <Player />
      <Taskbar />
    </div>
  );
}
